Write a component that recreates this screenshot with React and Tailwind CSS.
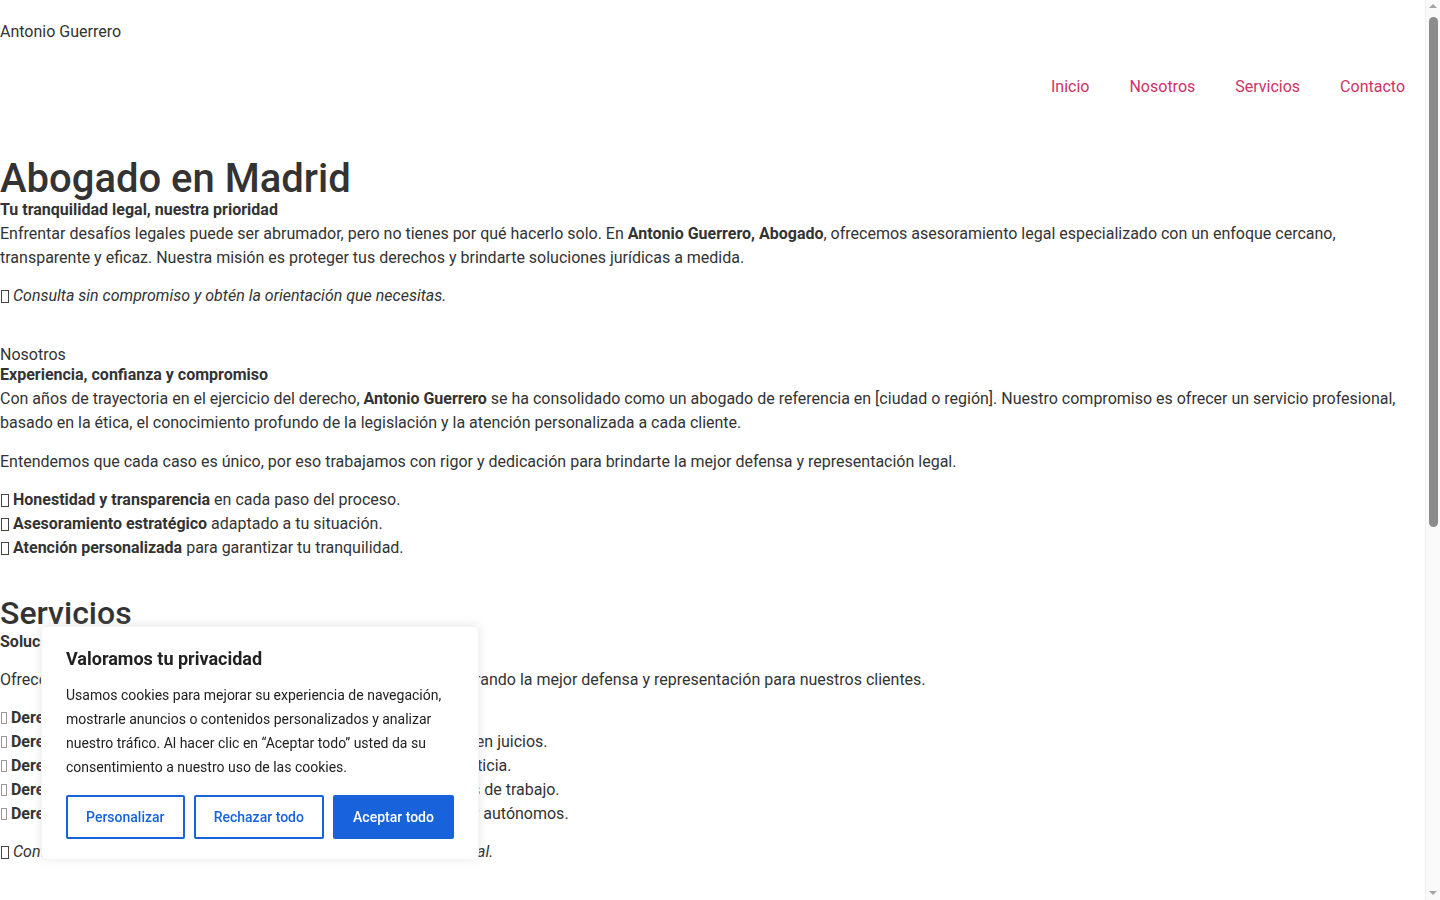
import React from "react";

const Box = () => (
  <span className="inline-block ml-[1px] w-[8px] h-[13px] border border-[#444] align-[-2px]" />
);
const Narrow = () => (
  <span className="inline-block ml-[1px] w-[6px] h-[12px] border border-[#999] align-[-1px]" />
);

export default function App() {
  return (
    <div className="font-['Roboto',sans-serif] text-[16px] leading-[24px] text-[#333] bg-white min-h-[1520px]">
      <div className="w-[1425px]">
        <header className="pt-[20px]">
          <div className="leading-[24px]">Antonio Guerrero</div>
          <nav className="mt-[31px] flex justify-end">
            <ul className="flex">
              {["Inicio", "Nosotros", "Servicios", "Contacto"].map((t) => (
                <li key={t}>
                  <a href="#" className="block px-5 leading-[24px] text-[#cc3366]">
                    {t}
                  </a>
                </li>
              ))}
            </ul>
          </nav>
        </header>

        <main>
          <section className="mt-[56px]">
            <h1 className="text-[40px] leading-[48px] font-medium text-[#333]">Abogado en Madrid</h1>
            <p className="mt-[-5px] font-bold">Tu tranquilidad legal, nuestra prioridad</p>
            <p className="mb-[14.4px]">
              Enfrentar desafíos legales puede ser abrumador, pero no tienes por qué hacerlo solo. En{" "}
              <strong>Antonio Guerrero, Abogado</strong>, ofrecemos asesoramiento legal especializado con un enfoque
              cercano, transparente y eficaz. Nuestra misión es proteger tus derechos y brindarte soluciones jurídicas a
              medida.
            </p>
            <p className="mb-[14.4px]">
              <Box /> <em>Consulta sin compromiso y obtén la orientación que necesitas.</em>
            </p>
          </section>

          <section className="mt-[35px]">
            <div>Nosotros</div>
            <p className="mt-[-4px] font-bold">Experiencia, confianza y compromiso</p>
            <p className="mb-[14.4px]">
              Con años de trayectoria en el ejercicio del derecho, <strong>Antonio Guerrero</strong> se ha consolidado
              como un abogado de referencia en [ciudad o región]. Nuestro compromiso es ofrecer un servicio profesional,
              basado en la ética, el conocimiento profundo de la legislación y la atención personalizada a cada cliente.
            </p>
            <p className="mb-[14.4px]">
              Entendemos que cada caso es único, por eso trabajamos con rigor y dedicación para brindarte la mejor
              defensa y representación legal.
            </p>
            <p className="mb-[14.4px]">
              <Box /> <strong>Honestidad y transparencia</strong> en cada paso del proceso.
              <br />
              <Box /> <strong>Asesoramiento estratégico</strong> adaptado a tu situación.
              <br />
              <Box /> <strong>Atención personalizada</strong> para garantizar tu tranquilidad.
            </p>
          </section>

          <section className="mt-[34px]">
            <h2 className="text-[32px] leading-[38px] font-medium">Servicios</h2>
            <p className="mt-[-2px] font-bold mb-[13.4px]">Soluciones legales a tu medida</p>
            <p className="mb-[14.4px]">
              Ofrecemos asesoramiento legal en varias áreas del derecho, asegurando la mejor defensa y representación
              para nuestros clientes.
            </p>
            <p className="mb-[14.4px]">
              <Narrow /> <strong>Derecho de Familia:</strong> Divorcios, custodia y pensiones.
              <br />
              <Narrow /> <strong>Derecho Civil:</strong> Contratos, sucesiones, reclamaciones y asistencia en juicios.
              <br />
              <Narrow /> <strong>Derecho Penal:</strong> Defensa legal en todo tipo de procesos ante la justicia.
              <br />
              <Narrow /> <strong>Derecho Laboral:</strong> Despidos, reclamaciones salariales y accidentes de trabajo.
              <br />
              <Narrow /> <strong>Derecho Mercantil:</strong> Contratos y asesoramiento legal a empresas y autónomos.
            </p>
            <p className="mb-[14.4px]">
              <Box /> <em>Contáctanos para recibir una valoración de tu caso de manera formal.</em>
            </p>
          </section>

          <section className="mt-[35px]">
            <div>Contacto</div>
            <p className="mt-[-4px] font-bold">Estamos aquí para ayudarte</p>
            <p className="mb-[14.4px]">
              Si necesitas asesoramiento legal, no dudes en ponerte en contacto con nosotros. Te atenderemos de forma
              personalizada y sin compromiso.
            </p>
            <p className="mb-[14.4px]">
              <Box /> <strong>Dirección:</strong> Madrid, España
              <br />
              <Box /> <strong>Teléfono:</strong> +34 000 000 000
              <br />
              <Box /> <strong>Email:</strong> info@antonioguerrero.es
              <br />
              <Box /> <strong>Horario:</strong> Lunes a viernes de 9:00 a 19:00
            </p>
          </section>
        </main>

        <footer className="mt-[60px] pb-[40px]">
          <p>Antonio Guerrero</p>
          <p>© 2025 Antonio Guerrero. Todos los derechos reservados.</p>
        </footer>
      </div>

      {/* browser scrollbar */}
      <div className="fixed right-0 top-0 w-[15px] h-screen bg-[#fafafa] border-l border-[#f0f0f0]">
        <div className="absolute left-[3px] top-[4px] w-0 h-0 border-l-[4px] border-r-[4px] border-b-[4px] border-l-transparent border-r-transparent border-b-[#a3a3a3]" />
        <div className="absolute left-[3px] top-[17px] w-[9px] h-[510px] rounded-full bg-[#8c8c8c]" />
        <div className="absolute left-[3px] bottom-[5px] w-0 h-0 border-l-[4px] border-r-[4px] border-t-[4px] border-l-transparent border-r-transparent border-t-[#a3a3a3]" />
      </div>

      <div className="fixed left-[41px] bottom-[40px] w-[438px] bg-white border border-[#f4f4f4] rounded-[6px] px-6 pt-5 pb-5 shadow-[0_-1px_10px_0_rgba(172,171,171,0.3)] font-['Roboto',sans-serif]">
        <p className="text-[18px] leading-[24px] font-bold text-[#212121] mb-3">Valoramos tu privacidad</p>
        <p className="text-[14px] leading-[24px] text-[#212121]">
          Usamos cookies para mejorar su experiencia de navegación, mostrarle anuncios o contenidos personalizados y
          analizar nuestro tráfico. Al hacer clic en “Aceptar todo” usted da su consentimiento a nuestro uso de las
          cookies.
        </p>
        <div className="mt-4 flex gap-[9px]">
          <button className="flex-auto px-2 py-2 border-2 border-[#1863dc] rounded-[2px] text-[14px] leading-[24px] font-medium text-[#1863dc] bg-transparent">
            Personalizar
          </button>
          <button className="flex-auto px-2 py-2 border-2 border-[#1863dc] rounded-[2px] text-[14px] leading-[24px] font-medium text-[#1863dc] bg-transparent">
            Rechazar todo
          </button>
          <button className="flex-auto px-2 py-2 border-2 border-[#1863dc] rounded-[2px] text-[14px] leading-[24px] font-medium text-white bg-[#1863dc]">
            Aceptar todo
          </button>
        </div>
      </div>
    </div>
  );
}
